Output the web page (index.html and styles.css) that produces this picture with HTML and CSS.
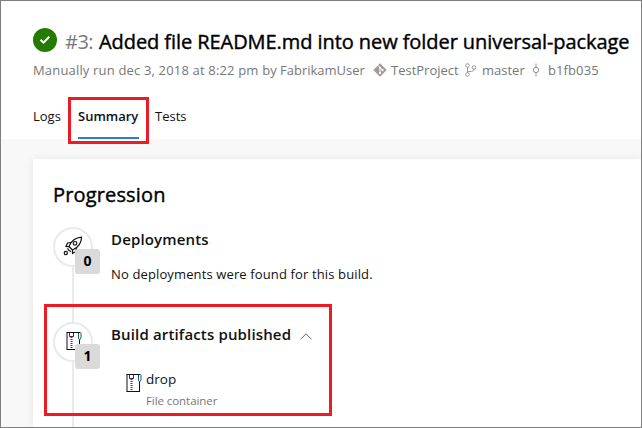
FILE: index.html
```
<!DOCTYPE html>
<html lang="en">
<head>
<meta charset="utf-8">
<title>Build summary</title>
<link rel="stylesheet" href="styles.css">
</head>
<body>
<div class="frame">
  <header class="header">
    <div class="title-row">
      <svg class="status" viewBox="0 0 24 24"><circle cx="12" cy="12" r="12" fill="#237b00"/><path d="M7.500 11.700l3 2.900 5.800-5.800" fill="none" stroke="#fff" stroke-width="2"/></svg>
      <h1 class="title"><span class="number">#3:</span><span class="name">Added file README.md into new folder universal-package</span></h1>
    </div>
    <div class="meta">
      <span class="run">Manually run dec 3, 2018 at 8:22 pm by</span>
      <span class="user">FabrikamUser</span>
      <svg class="git" viewBox="0 0 14 14"><path d="M7 .3L13.700 7 7 13.700.3 7z" fill="#a09c9a"/><path d="M5 2.400l2 2v6M7 4.800l2.800 2.700" fill="none" stroke="#fff"/><circle cx="7" cy="4.800" r="1.100" fill="#fff"/><circle cx="7" cy="10" r="1.100" fill="#fff"/><circle cx="9.600" cy="7.200" r="1.100" fill="#fff"/></svg>
      <span class="project">TestProject</span>
      <svg class="branch" viewBox="0 0 12 14"><g fill="none" stroke="#999"><circle cx="2.500" cy="2.500" r="1.800"/><circle cx="2.500" cy="11.500" r="1.800"/><circle cx="9" cy="4.500" r="1.800"/><path d="M2.500 4.300v5.400M9 6.300C9 8.300 7 8.500 5 8.500S2.500 9 2.500 9.700"/></g></svg>
      <span class="branch-name">master</span>
      <svg class="commit" viewBox="0 0 8 14"><path d="M4 .5v3.700M4 9.800v3.700" stroke="#999"/><circle cx="4" cy="7" r="2.700" fill="none" stroke="#999"/></svg>
      <span class="hash">b1fb035</span>
    </div>
    <nav class="tabs">
      <a class="tab logs">Logs</a>
      <a class="tab active">Summary</a>
      <a class="tab tests">Tests</a>
    </nav>
  </header>
  <main class="content">
    <section class="card">
      <h2 class="heading">Progression</h2>
      <div class="step">
        <div class="rail">
          <div class="node">
            <svg class="rocket" viewBox="0 0 20 20"><g fill="none" stroke="#111" stroke-width="1.200"><path d="M6 10.500C8 5 12 1.800 18.500 1.200C18.500 7 15 11.500 9.500 14z"/><circle cx="12" cy="7.300" r="1.800"/><path d="M8 6.500L4.500 7 3 10.500l3 .2M13.500 11.500l-.5 4-3.500 2V14"/><circle cx="2.800" cy="17" r="1.600"/><path d="M4.500 12.300L6 14.500l2 1"/></g></svg>
            <span class="badge">0</span>
          </div>
        </div>
        <div class="detail">
          <h3 class="step-title deploy">Deployments</h3>
          <p class="empty">No deployments were found for this build.</p>
        </div>
      </div>
      <div class="step">
        <div class="rail">
          <div class="node">
            <svg class="zip upper" viewBox="0 0 16 18"><path d="M.5.5h14M1 .5v17M.5 17.500H14M13.500 8v10" fill="none" stroke="#111"/><path d="M3.500 1v3.500h4V1" fill="none" stroke="#3f235d"/><path d="M5.500 5v12" stroke="#31445d" stroke-width="2" stroke-dasharray="1 1"/><path d="M12.500 1v5l1 2 1.500-2V1" fill="none" stroke="#17577e"/></svg>
            <span class="badge">1</span>
          </div>
        </div>
        <div class="detail">
          <h3 class="step-title"><span class="artifacts">Build artifacts published</span><svg class="chevron" viewBox="0 0 12 7"><path d="M.5 6.300L6 .8l5.500 5.500" fill="none" stroke="#555" stroke-width=".9"/></svg></h3>
          <div class="artifact">
            <svg class="zip" viewBox="0 0 16 18"><path d="M.5.5h14M1 .5v17M.5 17.500H14M13.500 8v10" fill="none" stroke="#111"/><path d="M3.500 1v3.500h4V1" fill="none" stroke="#3f235d"/><path d="M5.500 5v12" stroke="#31445d" stroke-width="2" stroke-dasharray="1 1"/><path d="M12.500 1v5l1 2 1.500-2V1" fill="none" stroke="#17577e"/></svg>
            <div>
              <div class="drop">drop</div>
              <div class="kind">File container</div>
            </div>
          </div>
        </div>
      </div>
    </section>
  </main>
  <div class="callout callout-tab"></div>
  <div class="callout callout-artifact"></div>
</div>
</body>
</html>
```
FILE: styles.css
```
* { box-sizing: border-box; }
body { margin: 0; font-family: "Open Sans", "Noto Sans", sans-serif; color: #111; }
h1, h2, h3, p { margin: 0; }
svg { display: block; flex: none; }
.frame { position: relative; width: 642px; height: 428px; border: 1px solid #7f7f7f; overflow: hidden; background: #f8f8f8; white-space: nowrap; }
.header { height: 138px; padding: 27px 0 0 32px; background: #fff; }
.title-row { display: flex; height: 28px; }
.status { width: 24px; height: 24px; }
.title { display: flex; margin-left: 8px; font-size: 20px; line-height: 28px; font-weight: 400; color: #000; }
.number { width: 34px; color: #777; letter-spacing: -.5px; }
.name { letter-spacing: -.07px; -webkit-text-stroke: .4px #000; }
.meta { display: flex; height: 18px; margin-top: 5px; font-size: 13px; line-height: 18px; color: #777; align-items: center; }
.run { width: 247px; letter-spacing: .17px; }
.user { width: 93px; }
.git { width: 14px; height: 14px; margin-right: 4px; }
.project { width: 74px; }
.branch { width: 12px; height: 14px; margin-right: 5px; }
.branch-name { width: 50px; }
.commit { width: 8px; height: 14px; margin-right: 8px; }
.hash { letter-spacing: .1px; }
.tabs { display: flex; gap: 16px; height: 33px; margin-top: 27px; font-size: 13px; line-height: 20px; }
.tab { height: 33px; }
.logs { width: 29px; }
.active { width: 61px; font-weight: 600; border-bottom: 2px solid #2b7cd3; }
.content { padding: 20px 0 0 32px; height: 288px; }
.card { height: 268px; padding: 20px 0 0 20px; background: #fff; box-shadow: 0 0 8px rgba(0, 0, 0, .08); }
.heading { height: 48px; font-size: 20px; line-height: 32px; font-weight: 400; letter-spacing: .15px; color: #000; -webkit-text-stroke: .4px #000; }
.step { display: flex; height: 95px; }
.step:last-child { height: 106px; }
.rail { width: 40px; background: linear-gradient(#eaeaea, #eaeaea) 19px 0 / 2px 100% no-repeat; }
.node { position: relative; display: flex; justify-content: center; align-items: center; width: 40px; height: 40px; border: 2px solid #eaeaea; border-radius: 50%; background: #fff; }
.badge { position: absolute; left: 20px; top: 20px; width: 25px; height: 25px; border-radius: 3px; background: #dadada; color: #000; font-weight: 700; font-size: 14px; line-height: 24px; text-align: center; }
.rocket { width: 20px; height: 20px; margin-top: -2px; }
.zip { width: 16px; height: 18px; }
.upper { margin: -2px 0 0 2px; }
.detail { padding-left: 18px; }
.step-title { display: flex; align-items: center; height: 24px; font-size: 15px; line-height: 24px; font-weight: 600; letter-spacing: .15px; }
.empty { margin-top: 12px; font-size: 13px; line-height: 22px; letter-spacing: .13px; }
.artifacts { width: 189px; }
.chevron { width: 12px; height: 7px; margin-top: 5px; }
.artifact { display: flex; gap: 4px; margin: 23px 0 0 15px; }
.artifact .zip { margin-top: 5px; }
.drop { font-size: 13.5px; line-height: 20px; }
.kind { font-size: 11.5px; line-height: 20px; color: #777; margin-top: 2px; letter-spacing: -.07px; }
.callout { position: absolute; border: 3px solid #ed1c24; }
.callout-tab { left: 67px; top: 96px; width: 81px; height: 47px; }
.callout-artifact { left: 43px; top: 303px; width: 288px; height: 112px; }
```
